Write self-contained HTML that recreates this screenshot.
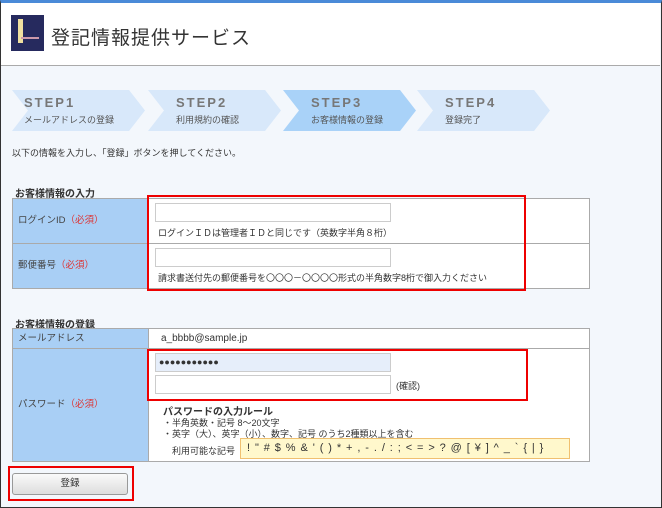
<!DOCTYPE html><html><head><meta charset="utf-8"><style>
*{box-sizing:border-box;margin:0;padding:0}
body{width:662px;height:508px;font-family:"Liberation Sans","Noto Sans CJK JP",sans-serif;font-size:10px;color:#333;position:relative;overflow:hidden;background:#fff}
.frame{position:absolute;left:0;top:0;width:662px;height:508px;border:1px solid #333;border-top:3px solid #4a8ad8;background:#f3f7fc}
.hdr{position:absolute;left:1px;top:3px;width:659px;height:63px;background:#fff;border-bottom:1px solid #aaa}
.logo{position:absolute;left:10px;top:12px;width:33px;height:36px;background:#262a5e}
.title{position:absolute;left:50px;top:20px;font-size:19px;color:#333;letter-spacing:1px}
.step{position:absolute;top:90px;height:41px;background:#d8e8fa;clip-path:polygon(0 0,88% 0,100% 50%,88% 100%,0 100%,12% 50%)}
.step b{position:absolute;left:28px;top:5px;font-size:13px;letter-spacing:2px;color:#777}
.step span{position:absolute;left:28px;top:23px;font-size:9px;color:#555}
.abs{position:absolute}
.lab{position:absolute;left:12px;width:137px;background:#a9cff5;border:1px solid #aaa;padding-left:5px;font-size:9.5px;color:#444}
.val{position:absolute;left:148px;width:442px;background:#fff;border:1px solid #aaa}
.req{color:#d33}
.inp{position:absolute;width:236px;height:19px;background:#fff;border:1px solid #ccc}
.red{position:absolute;border:2px solid #e00}
</style></head><body>
<div class="frame"></div>
<div class="hdr"><div class="logo"><div style="position:absolute;left:7px;top:4px;width:5px;height:24px;background:#f0e0a0"></div><div style="position:absolute;left:10px;top:22px;width:18px;height:2px;background:#c9a"></div></div><div class="title">登記情報提供サービス</div></div>
<div class="step" style="left:12px;width:133px"><b style="left:12px">STEP1</b><span style="left:12px">メールアドレスの登録</span></div>
<div class="step" style="left:148px;width:133px"><b>STEP2</b><span>利用規約の確認</span></div>
<div class="step" style="left:283px;width:133px;background:#a9d2f8"><b>STEP3</b><span>お客様情報の登録</span></div>
<div class="step" style="left:417px;width:133px"><b>STEP4</b><span>登録完了</span></div>
<div class="abs" style="left:12px;top:146px;font-size:9px">以下の情報を入力し、「登録」ボタンを押してください。</div>
<div class="abs" style="left:15px;top:185px;font-size:10px;font-weight:bold">お客様情報の入力</div>
<div class="lab" style="top:198px;height:46px;line-height:44px">ログインID<span class="req">（必須）</span></div>
<div class="val" style="top:198px;height:46px"></div>
<div class="lab" style="top:243px;height:46px;line-height:44px">郵便番号<span class="req">（必須）</span></div>
<div class="val" style="top:243px;height:46px"></div>
<div class="inp" style="left:155px;top:203px"></div>
<div class="abs" style="left:158px;top:226px;font-size:9px">ログインＩＤは管理者ＩＤと同じです（英数字半角８桁）</div>
<div class="inp" style="left:155px;top:248px"></div>
<div class="abs" style="left:158px;top:271px;font-size:9px">請求書送付先の郵便番号を〇〇〇－〇〇〇〇形式の半角数字8桁で御入力ください</div>
<div class="red" style="left:147px;top:195px;width:379px;height:96px"></div>
<div class="abs" style="left:15px;top:316px;font-size:10px;font-weight:bold">お客様情報の登録</div>
<div class="lab" style="top:328px;height:21px;line-height:19px">メールアドレス</div>
<div class="val" style="top:328px;height:21px"><span style="position:absolute;left:12px;top:4px;font-size:10px">a_bbbb@sample.jp</span></div>
<div class="lab" style="top:348px;height:114px;line-height:112px">パスワード<span class="req">（必須）</span></div>
<div class="val" style="top:348px;height:114px"></div>
<div class="inp" style="left:155px;top:353px;background:#e6eefa;font-size:9px;line-height:16px;padding-left:3px">●●●●●●●●●●●</div>
<div class="inp" style="left:155px;top:375px"></div>
<div class="abs" style="left:396px;top:379px;font-size:9px">(確認)</div>
<div class="red" style="left:147px;top:349px;width:381px;height:52px"></div>
<div class="abs" style="left:163px;top:403px;font-size:10px;font-weight:bold">パスワードの入力ルール</div>
<div class="abs" style="left:163px;top:416px;font-size:9px">・半角英数・記号 8～20文字</div>
<div class="abs" style="left:163px;top:427px;font-size:9px">・英字（大）、英字（小）、数字、記号 のうち2種類以上を含む</div>
<div class="abs" style="left:172px;top:444px;font-size:9px">利用可能な記号</div>
<div class="abs" style="left:240px;top:438px;width:330px;height:21px;background:#fff8cc;border:1px solid #f0c070;font-size:11px;line-height:19px;padding-left:6px;letter-spacing:4.9px;white-space:nowrap;overflow:hidden">!"#$%&amp;'()*+,-./:;&lt;=&gt;?@[¥]^_`{|}</div>
<div class="abs" style="left:12px;top:473px;width:116px;height:22px;border:1px solid #999;border-radius:3px;background:linear-gradient(#fafafa,#ddd);text-align:center;line-height:20px;font-size:9.5px">登録</div>
<div class="red" style="left:8px;top:466px;width:126px;height:35px"></div>
</body></html>
